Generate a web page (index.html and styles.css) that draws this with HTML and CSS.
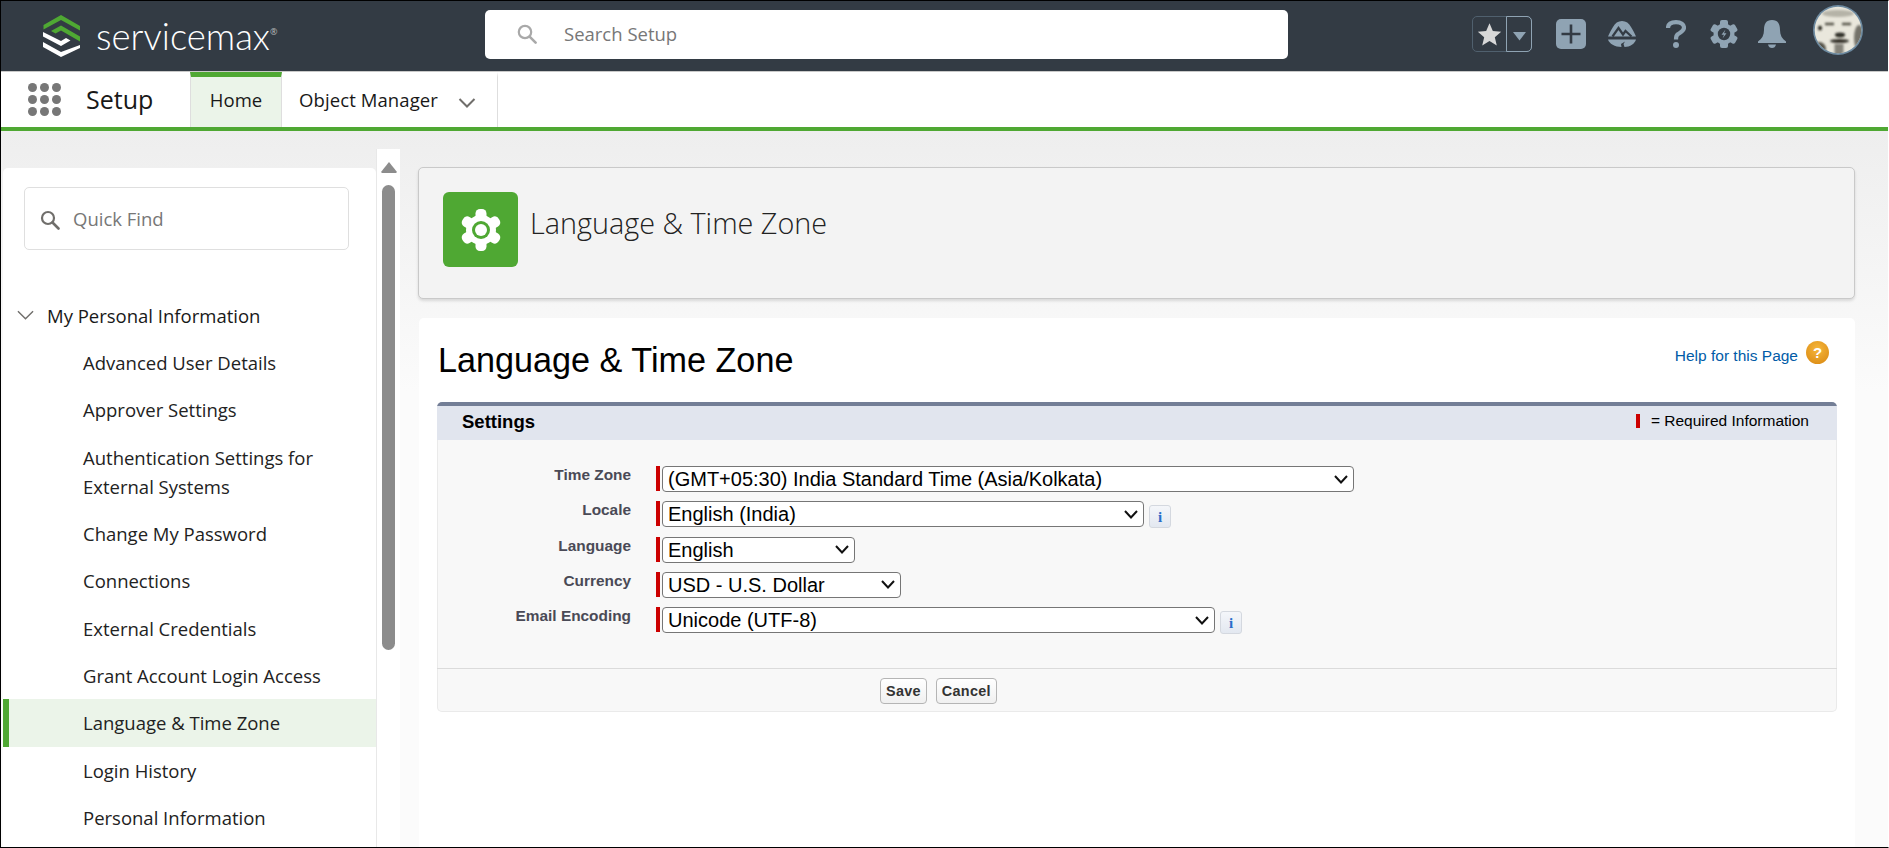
FILE: index.html
```html
<!DOCTYPE html>
<html lang="en">
<head>
<meta charset="utf-8">
<title>Language &amp; Time Zone</title>
<link rel="stylesheet" href="styles.css">
</head>
<body>
<div class="page">
  <header class="top">
    <div class="logo">
      <svg class="logo-mark" viewBox="0 0 38 42" width="38" height="42">
        <path fill="#4fa833" d="M19 0 38 11V15.500L19 5 1.500 14.500V10Z"/>
        <path fill="#4fa833" d="M19 10.500 38 21.500V26.500L19 15.500 13.500 18.500 9 16Z"/>
        <path fill="#fff" d="M1 17 19 26 24 23 28.500 25.500 19 31 1 21.500Z"/>
        <path fill="#fff" d="M1 27 19 37 38 30V33L19 42 1 32Z"/>
      </svg>
      <span class="logo-text">servicemax</span><span class="logo-reg">®</span>
    </div>
    <div class="search">
      <svg class="search-icon" viewBox="0 0 20 20" width="20" height="20"><circle cx="8" cy="8" r="6.200" fill="none" stroke="#a9a9a9" stroke-width="2.200"/><path d="M12.600 12.600 18.600 18.600" stroke="#a9a9a9" stroke-width="2.600" stroke-linecap="round"/></svg>
      <span class="search-text">Search Setup</span>
    </div>
    <div class="tools">
      <div class="fav">
        <span class="fav-star"><svg viewBox="0 0 24 24" width="25" height="25"><path fill="#d8d8d8" d="M12 1.200 15.200 8.600 23.200 9.300 17.100 14.600 19 22.600 12 18.300 5 22.600 6.900 14.600 .8 9.300 8.800 8.600Z"/></svg></span>
        <span class="fav-caret"><svg viewBox="0 0 14 10" width="15" height="10"><path fill="#8fa3b3" d="M.5 1H13.500L7 9.500Z"/></svg></span>
      </div>
      <svg class="tool-plus" viewBox="0 0 30 30" width="30" height="30"><rect width="30" height="30" rx="5" fill="#8fa3b3"/><path d="M15 5.500V24.500M5.500 15H24.500" stroke="#333b44" stroke-width="2.600"/></svg>
      <svg class="tool-trail" viewBox="0 -1 28 28" width="28" height="28">
        <path fill="#8fa3b3" d="M14 0C18 0 21 2 23 6 25 9 27 13 28 15.500H0C1 13 3 9 5 6 7 2 10 0 14 0Z"/>
        <path fill="none" stroke="#333b44" stroke-width="2.200" d="M4.500 15.500 10.500 7 15 13.500 17.500 10 23.500 15.500"/>
        <path fill="#8fa3b3" d="M0 18.500H28C27 22.500 22 26 16.500 26L15.500 23 17 20.500 13 23 13.500 26C7 26 1 22.500 0 18.500Z"/>
      </svg>
      <svg class="tool-help" viewBox="0 0 20 28" width="20" height="28"><path fill="none" stroke="#8fa3b3" stroke-width="4.200" d="M2 8C2 4 5 2.100 10 2.100S18 4.400 18 7.800C18 11.500 14 12.500 11.500 14.500 10.300 15.500 10 16.500 10 19.500"/><circle cx="10" cy="25" r="3" fill="#8fa3b3"/></svg>
      <svg class="tool-gear" viewBox="-14 -14 28 28" width="28" height="28">
        <g fill="#8fa3b3">
          <rect x="-4" y="-14" width="8" height="28" rx="2"/>
          <rect x="-4" y="-14" width="8" height="28" rx="2" transform="rotate(60)"/>
          <rect x="-4" y="-14" width="8" height="28" rx="2" transform="rotate(120)"/>
          <circle r="10.500"/>
        </g>
        <circle r="6.200" fill="#333b44"/>
        <path fill="#8fa3b3" d="M1.500-4.500-2.500 .8H0L-1.500 4.500 2.500-.8H0Z"/>
      </svg>
      <svg class="tool-bell" viewBox="0 0 28 28" width="28" height="28"><path fill="#8fa3b3" d="M14 0C20 0 22 4 22 10 22 15 24 19 28 21.500V23H0V21.500C4 19 6 15 6 10 6 4 8 0 14 0Z"/><path fill="#8fa3b3" d="M10 24.500H18C17.500 27 16 28 14 28S10.500 27 10 24.500Z"/></svg>
      <svg class="avatar" viewBox="0 0 50 50" width="50" height="50">
        <defs>
          <clipPath id="face"><circle cx="25" cy="25" r="23.300"/></clipPath>
          <filter id="soft" x="-20%" y="-20%" width="140%" height="140%"><feGaussianBlur stdDeviation="1.100"/></filter>
        </defs>
        <circle cx="25" cy="25" r="25" fill="#6d8aa0"/>
        <circle cx="25" cy="25" r="23.300" fill="#e9e7dc"/>
        <g clip-path="url(#face)" filter="url(#soft)">
          <ellipse cx="7" cy="23" rx="2" ry="2.600" fill="#2a2923"/>
          <ellipse cx="6" cy="44" rx="7" ry="7" fill="#55534a"/>
          <ellipse cx="46" cy="33" rx="5" ry="13" fill="#75736a"/>
          <ellipse cx="25" cy="8.500" rx="16" ry="3.500" fill="#b5b3a7"/>
          <path d="M12 19H21M29 19H38" stroke="#55534a" stroke-width="2.400"/>
          <ellipse cx="27" cy="30" rx="5" ry="2.400" fill="#2f2d26"/>
          <ellipse cx="26.500" cy="36" rx="9.500" ry="2" fill="#35332b"/>
          <path d="M26 39V50" stroke="#85837a" stroke-width="9"/>
        </g>
      </svg>
    </div>
  </header>

  <nav class="tabs">
    <span class="waffle">
      <i></i><i></i><i></i><i></i><i></i><i></i><i></i><i></i><i></i>
    </span>
    <span class="app-name">Setup</span>
    <a class="tab tab-active">Home</a>
    <a class="tab tab-om">Object Manager
      <svg viewBox="0 0 18 12" width="18" height="12"><path d="M1.500 2 9 9.500 16.500 2" fill="none" stroke="#706e6b" stroke-width="2"/></svg>
    </a>
  </nav>

  <div class="content">
    <aside class="side">
      <div class="side-card">
        <div class="quick">
          <svg viewBox="0 0 20 20" width="20" height="20"><circle cx="8" cy="8" r="6" fill="none" stroke="#706e6b" stroke-width="2.200"/><path d="M12.500 12.500 18.500 18.500" stroke="#706e6b" stroke-width="2.600" stroke-linecap="round"/></svg>
          <span>Quick Find</span>
        </div>
        <div class="tree-head">
          <svg viewBox="0 0 18 10" width="17" height="10"><path d="M1 1 9 9 17 1" fill="none" stroke="#706e6b" stroke-width="1.500"/></svg>
          <span>My Personal Information</span>
        </div>
        <ul class="tree">
          <li>Advanced User Details</li>
          <li>Approver Settings</li>
          <li>Authentication Settings for External Systems</li>
          <li>Change My Password</li>
          <li>Connections</li>
          <li>External Credentials</li>
          <li>Grant Account Login Access</li>
          <li class="current">Language &amp; Time Zone</li>
          <li>Login History</li>
          <li>Personal Information</li>
        </ul>
      </div>
      <div class="scroll">
        <svg class="scroll-up" viewBox="0 0 16 11" width="16" height="11"><path fill="#8c8c8c" d="M8 0 16 10 15 11H1L0 10Z"/></svg>
        <div class="scroll-thumb"></div>
      </div>
    </aside>

    <main class="main">
      <section class="page-head">
        <span class="tile">
          <svg viewBox="-21 -21 42 42" width="42" height="42">
            <g fill="#fff">
              <rect x="-5.500" y="-21" width="11" height="42" rx="4.500"/>
              <rect x="-5.500" y="-21" width="11" height="42" rx="4.500" transform="rotate(60)"/>
              <rect x="-5.500" y="-21" width="11" height="42" rx="4.500" transform="rotate(120)"/>
              <circle r="15"/>
            </g>
            <circle r="9" fill="#4fa833"/>
            <circle r="6" fill="#fff"/>
          </svg>
        </span>
        <h2 class="page-name">Language &amp; Time Zone</h2>
      </section>

      <section class="sheet">
        <div class="sheet-head">
          <h1>Language &amp; Time Zone</h1>
          <a class="help">Help for this Page <span class="help-dot">?</span></a>
        </div>
        <form class="block">
          <div class="block-head">
            <h3>Settings</h3>
            <span class="required"><i class="req"></i>= Required Information</span>
          </div>
          <div class="block-body">
            <label>Time Zone</label>
            <div class="field"><i class="bar"></i><select class="w-zone"><option>(GMT+05:30) India Standard Time (Asia/Kolkata)</option></select></div>
            <label>Locale</label>
            <div class="field"><i class="bar"></i><select class="w-locale"><option>English (India)</option></select><span class="info">i</span></div>
            <label>Language</label>
            <div class="field"><i class="bar"></i><select class="w-lang"><option>English</option></select></div>
            <label>Currency</label>
            <div class="field"><i class="bar"></i><select class="w-curr"><option>USD - U.S. Dollar</option></select></div>
            <label>Email Encoding</label>
            <div class="field"><i class="bar"></i><select class="w-mail"><option>Unicode (UTF-8)</option></select><span class="info">i</span></div>
          </div>
          <div class="block-foot">
            <button type="button">Save</button>
            <button type="button">Cancel</button>
          </div>
        </form>
      </section>
    </main>
  </div>
</div>
</body>
</html>
```
FILE: styles.css
```css
* { box-sizing: border-box; }
html, body { margin: 0; padding: 0; height: 100%; overflow: hidden; background: #fff; }
body { font-family: "Open Sans", "Noto Sans", sans-serif; color: #181818; }
.page {
  width: 1889px; height: 848px; overflow: hidden;
  border: 1px solid #000; border-right-color: #fff;
  display: flex; flex-direction: column;
}
.top {
  height: 71px; flex: none; background: #333b44; border-bottom: 1px solid #c9c9c9;
  display: flex; align-items: center;
}
.logo { display: flex; align-items: center; margin-left: 41px; width: 443px; color: #fff; }
.logo-mark { flex: none; }
.logo-text { font-family: Lato, sans-serif; font-weight: 300; font-size: 36.500px; margin-left: 16px; line-height: 1; }
.logo-reg { font-size: 9px; align-self: flex-start; margin-top: 10px; color: #bbb; }
.search {
  width: 803px; height: 49px; background: #fff; border-radius: 5px; align-self: flex-start; margin-top: 9px;
  display: flex; align-items: center; padding: 0 0 2px 32px;
}
.search-text { margin-left: 27px; font-size: 18.500px; color: #777; }
.tools { flex: 1; display: flex; align-items: center; padding-bottom: 4px; }
.fav {
  margin-left: 184px; width: 60px; height: 36px; display: flex;
  border: 1px solid #50606e; border-radius: 5px;
}
.fav-star { width: 33px; display: flex; align-items: center; justify-content: center; }
.fav-caret {
  flex: 1; margin: -1px -1px -1px 0; border: 1px solid #8fa3b3; border-radius: 0 5px 5px 0;
  display: flex; align-items: center; justify-content: center; padding-top: 3px;
}
.tool-plus { margin-left: 24px; }
.tool-trail { margin-left: 22px; }
.tool-help { margin-left: 30px; }
.tool-gear { margin-left: 24px; }
.tool-bell { margin-left: 20px; }
.avatar { margin-left: 27px; margin-top: -8px; }

.tabs {
  height: 59px; flex: none; background: #fff; border-bottom: 4px solid #4fa833;
  display: flex; align-items: stretch;
}
.waffle {
  margin-left: 27px; width: 33px; align-self: center;
  display: grid; grid-template-columns: repeat(3, 9px); gap: 3px;
}
.waffle i { width: 9px; height: 9px; border-radius: 50%; background: #777; }
.app-name { margin-left: 25px; width: 104px; font-size: 25px; line-height: 55px; color: #181818; }
.tab { font-size: 18.500px; line-height: 46px; border-top: 5px solid transparent; border-right: 1px solid #dedede; color: #181818; letter-spacing: .1px; }
.tab-active {
  width: 92px; text-align: center; background: #ebf4e9; border-top-color: #4fa833;
  border-left: 1px solid #dedede;
}
.tab-om { width: 216px; padding: 0 0 4px 17px; display: flex; align-items: center; gap: 20px; }
.tab-om svg { margin-top: 5px; }

.content {
  flex: 1; min-height: 0; display: flex;
  background: linear-gradient(#eeeeee, #fbfbfb 260px);
}
.side { width: 398px; margin-left: 2px; padding-top: 18px; display: flex; flex: none; }
.side-card {
  width: 373px; margin-top: 19px; background: #fff; border-radius: 5px 5px 0 0;
  padding-top: 19px;
}
.quick {
  margin-left: 21px; width: 325px; height: 63px; border: 1px solid #dfdfdf; border-radius: 5px;
  display: flex; align-items: center; padding-left: 15px; gap: 13px; font-size: 18.500px; color: #777;
}
.quick svg { margin-top: 2px; }
.tree-head {
  margin-top: 48px; height: 34px; display: flex; align-items: center; font-size: 18.500px;
  padding-left: 14px; gap: 13px; color: #181818;
}
.tree { list-style: none; margin: 7px 0 0; padding: 0; }
.tree li {
  padding: 9px 20px 9px 80px; font-size: 18.500px; line-height: 29.300px; color: #222;
}
.tree li.current { background: #ebf4e9; border-left: 6px solid #4fa833; padding-left: 74px; }
.scroll {
  width: 24px; flex: none; background: #fff; border-left: 1px solid #e8e8e8;
  display: flex; flex-direction: column; align-items: center; padding-top: 13px;
}
.scroll-thumb { width: 13px; height: 465px; margin-top: 12px; background: #8c8c8c; border-radius: 7px; }

.main { flex: 1; padding: 36px 33px 0 17px; min-width: 0; }
.page-head {
  height: 132px; background: #f3f3f3; border: 1px solid #c9c9c9; border-radius: 5px;
  box-shadow: 0 2px 3px rgba(0,0,0,.12);
  display: flex; align-items: flex-start; padding: 24px 0 0 24px;
}
.tile {
  width: 75px; height: 75px; border-radius: 6px; background: #4fa833; flex: none;
  display: flex; align-items: center; justify-content: center;
}
.page-name { margin: 12px 0 0 12px; font-size: 28.800px; font-weight: 300; line-height: 38px; color: #222; }
.sheet { margin: 19px 0 0 1px; height: 540px; background: #fff; border-radius: 5px 5px 0 0; padding: 0 18px; }
.sheet-head { height: 84px; display: flex; justify-content: space-between; font-family: "Liberation Sans", Arial, sans-serif; }
.sheet-head h1 { margin: 22px 0 0 1px; font-size: 34.200px; font-weight: 400; line-height: 40px; color: #000; }
.help { margin: 26px 8px 0 0; font-size: 15.500px; color: #015ba7; display: flex; align-items: flex-start; line-height: 24px; gap: 8px; }
.help-dot {
  width: 23px; height: 23px; border-radius: 50%; margin-top: -3px;
  background: radial-gradient(circle at 50% 35%, #f6b73c, #d8860f);
  color: #fff; font-weight: 700; font-size: 15px; line-height: 23px; text-align: center;
}
.block {
  font-family: "Liberation Sans", Arial, sans-serif;
  background: #f8f8f8; border-radius: 5px; border-top: 4px solid #737e96;
  box-shadow: 0 0 0 1px #eaeaea inset;
}
.block-head {
  height: 34px; background: #e1e5ee; display: flex; justify-content: space-between; align-items: center;
  padding: 0 28px 0 25px;
}
.block-head h3 { margin: 0 0 2px; font-size: 18.500px; font-weight: 700; color: #000; }
.required { font-size: 15.500px; color: #000; display: flex; align-items: center; padding-bottom: 5px; }
.req { width: 4px; height: 14px; background: #c00; margin-right: 11px; }
.block-body {
  height: 229px; padding: 26px 0 0 0;
  display: grid; grid-template-columns: 194px 1fr; grid-auto-rows: 35.250px; column-gap: 25px;
  border-bottom: 1px solid #dbdbdb;
}
.block-body label { text-align: right; font-size: 15.400px; font-weight: 700; line-height: 17px; color: #4a4a56; }
.field { display: flex; align-items: flex-start; }
.bar { width: 4px; height: 25px; background: #c00; margin-right: 2px; }
select {
  font-family: "Liberation Sans", Arial, sans-serif; font-size: 20px; height: 26px; padding: 0 24px 0 5px;
  appearance: none; -webkit-appearance: none;
  background: #fff url("data:image/svg+xml,%3Csvg xmlns='http://www.w3.org/2000/svg' width='14' height='9' viewBox='0 0 14 9'%3E%3Cpath d='M1 1l6 6.500 6-6.500' fill='none' stroke='%23111' stroke-width='2'/%3E%3C/svg%3E") no-repeat right 5px center;
  color: #000; border: 1px solid #767676; border-radius: 4px;
}
.w-zone { width: 692px; }
.w-locale { width: 482px; }
.w-lang { width: 193px; }
.w-curr { width: 239px; }
.w-mail { width: 553px; }
.info {
  width: 22px; height: 23px; margin: 4px 0 0 5px; border: 1px solid #d4d8df; border-radius: 3px;
  background: linear-gradient(#f4f6fa, #e3e8f0); color: #2a6dc9;
  font-family: "Liberation Serif", serif; font-weight: 700; font-size: 15px; line-height: 22px; text-align: center;
}
.block-foot { height: 43px; padding: 9px 0 0 443px; display: flex; gap: 9px; align-items: flex-start; }
button {
  font-family: "Liberation Sans", Arial, sans-serif; font-size: 14.400px; font-weight: 700; color: #333;
  height: 26px; padding: 0 5px; letter-spacing: .3px;
  background: linear-gradient(#fff, #f0f0f0); border: 1px solid #b5b5b5; border-radius: 4px;
}
```
